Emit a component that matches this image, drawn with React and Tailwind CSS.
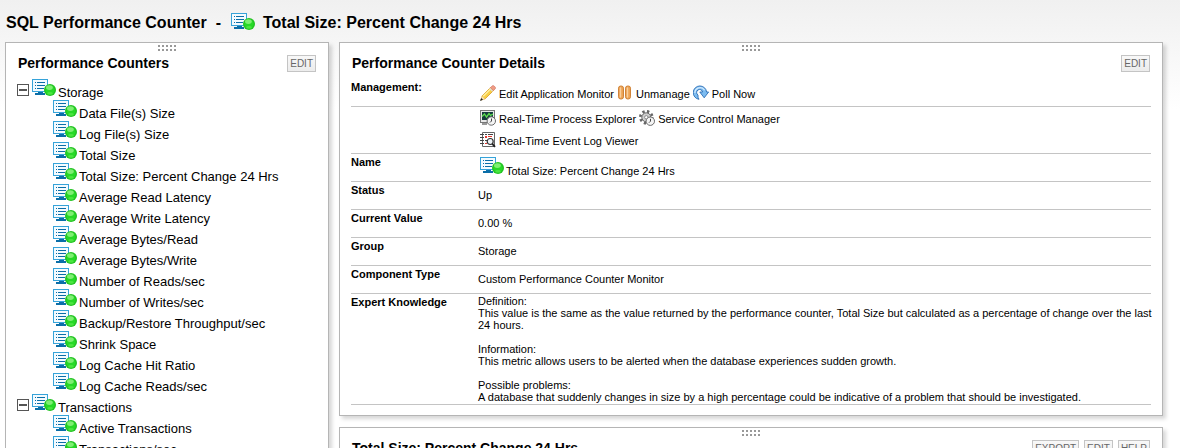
import React from "react";

const TREE = [
  {
    name: "Storage",
    items: [
      "Data File(s) Size",
      "Log File(s) Size",
      "Total Size",
      "Total Size: Percent Change 24 Hrs",
      "Average Read Latency",
      "Average Write Latency",
      "Average Bytes/Read",
      "Average Bytes/Write",
      "Number of Reads/sec",
      "Number of Writes/sec",
      "Backup/Restore Throughput/sec",
      "Shrink Space",
      "Log Cache Hit Ratio",
      "Log Cache Reads/sec",
    ],
  },
  { name: "Transactions", items: ["Active Transactions", "Transactions/sec"] },
];

function MonitorIcon() {
  return (
    <svg width="24" height="17" viewBox="0 0 24 17" className="shrink-0" aria-hidden="true">
      <rect x="0.5" y="0.5" width="15" height="12" fill="#f4fbff" stroke="#36a3d9" />
      <path d="M3 3h1v1H3zM3 6h1v1H3zM3 9h1v1H3zM5 3h8v1H5zM5 6h8v1H5zM5 9h7v1H5z" fill="#0b6ea8" />
      <path d="M6 13h5v1H6zM3 14h10v2H3z" fill="#0b6ea8" />
      <circle cx="18" cy="11" r="6" fill="#22c322" />
      <circle cx="18" cy="11" r="4.6" fill="#27d927" />
      <ellipse cx="17.4" cy="8.6" rx="3.4" ry="2.4" fill="#9cf58c" opacity="0.75" />
      <ellipse cx="18" cy="14.4" rx="2.8" ry="1.4" fill="#63ee50" opacity="0.6" />
    </svg>
  );
}

function PencilIcon() {
  return (
    <svg width="16" height="16" viewBox="0 0 16 16" className="shrink-0" aria-hidden="true">
      <path d="M1 15 2.200 10.800 10.500 2.500 13.500 5.500 5.200 13.800z" fill="#f9cf45" stroke="#d59a26" strokeWidth="0.8" />
      <path d="M3.200 11.300 11 3.500" stroke="#fff0a0" strokeWidth="1.400" />
      <path d="M10.300 2.700 12.300 0.800Q13.200 0.100 14.200 1.100L15.200 2.100Q16 3 15.200 3.900L13.300 5.700z" fill="#ef9c86" stroke="#cf7363" strokeWidth="0.600" />
      <path d="M9.700 3.300 12.700 6.300" stroke="#ddd" strokeWidth="1.200" />
      <path d="M2 11.200 4.800 14 0.500 15.500z" fill="#f6e0b8" />
      <path d="M1.200 13 3 14.800 0 16z" fill="#222" />
    </svg>
  );
}

function PauseIcon() {
  return (
    <svg width="16" height="16" viewBox="0 0 16 16" className="shrink-0" aria-hidden="true">
      <rect x="1.500" y="1" width="5" height="13" rx="2.200" fill="#eda355" stroke="#cf8338" />
      <rect x="8.500" y="1" width="5" height="13" rx="2.200" fill="#eda355" stroke="#cf8338" />
      <path d="M3.500 3v9M10.500 3v9" stroke="#f9cf9c" strokeWidth="1.400" strokeLinecap="round" />
    </svg>
  );
}

function PollIcon() {
  return (
    <svg width="16" height="16" viewBox="0 0 16 16" className="shrink-0" aria-hidden="true">
      <path
        d="M6 14.300A6.700 6.700 0 1 1 13.600 7H15.600L11.200 12.800 6.800 7H9.600A3 3 0 1 0 5 10Q4.600 12.500 6 14.300z"
        fill="#7dbcf0" stroke="#2a6db4" strokeWidth="0.9" strokeLinejoin="round"
      />
      <path d="M1.900 8A5.200 5.200 0 0 1 11.600 5.300" fill="none" stroke="#d3ebff" strokeWidth="1.200" />
    </svg>
  );
}

function ProcessIcon() {
  return (
    <svg width="16" height="16" viewBox="0 0 16 16" className="shrink-0" aria-hidden="true">
      <rect x="0.5" y="0.500" width="14" height="12" fill="#e8e8e8" stroke="#777" />
      <rect x="2" y="2" width="11" height="8" fill="#153c3c" />
      <path d="M2 6.500 4.500 4 6.500 7 9 3.500 10.500 5.500 13 4" fill="none" stroke="#5fe04f" strokeWidth="1.300" />
      <path d="M2 13h5v2H2z" fill="#999" />
      <circle cx="11.300" cy="11" r="4.200" fill="#f4f4f4" stroke="#6a6a6a" />
      <path d="M11.500 8.500V11L10 12.500" fill="none" stroke="#444" />
    </svg>
  );
}

function GearIcon() {
  return (
    <svg width="16" height="16" viewBox="0 0 16 16" className="shrink-0" aria-hidden="true">
      <circle cx="7.300" cy="7.300" r="6" fill="none" stroke="#666" strokeWidth="2.600" strokeDasharray="2.300 2.412" />
      <circle cx="7.300" cy="7.300" r="4.500" fill="#cfcfcf" stroke="#666" />
      <circle cx="7.300" cy="7.300" r="1.700" fill="#fff" stroke="#777" strokeWidth="0.800" />
      <circle cx="11.300" cy="11.200" r="4.200" fill="#f5f5f5" stroke="#6a6a6a" />
      <path d="M11.500 8.800V11.200L10 12.700" fill="none" stroke="#444" />
    </svg>
  );
}

function LogIcon() {
  return (
    <svg width="16" height="16" viewBox="0 0 16 16" className="shrink-0" aria-hidden="true">
      <path d="M2.500 0.500h12v14h-12z" fill="#fff" stroke="#666" />
      <path d="M0 2h4v1H0zM0 5h4v1H0zM0 8h4v1H0zM0 11h4v1H0z" fill="#444" />
      <path d="M5 2h2v1H5zM8 2h5v1H8z" fill="#444" />
      <path d="M5 4h2v2H5zM8 4h4v1H8z" fill="#e33c33" />
      <path d="M5 8h2v1H5z" fill="#444" />
      <path d="M5 11h2v1H5z" fill="#e33c33" />
      <circle cx="10.200" cy="9.500" r="3" fill="#eef4f8" stroke="#333" strokeWidth="1.200" />
      <path d="M12.300 11.800 15 14.800" stroke="#222" strokeWidth="1.800" />
    </svg>
  );
}

function Grip() {
  return (
    <svg width="19" height="7" viewBox="0 0 19 7" className="mx-auto block" aria-hidden="true">
      <path
        d="M0 0h2v2H0zM4 0h2v2H4zM8 0h2v2H8zM12 0h2v2h-2zM16 0h2v2h-2zM0 4h2v2H0zM4 4h2v2H4zM8 4h2v2H8zM12 4h2v2h-2zM16 4h2v2h-2z"
        fill="#999"
      />
    </svg>
  );
}

function PanelButton({ children }) {
  return (
    <button
      type="button"
      className="h-[17px] border border-[#c4c4c4] bg-gradient-to-b from-[#f8f8f8] to-[#ececec] px-[2px] text-[10px] leading-[14px] text-[#666]"
    >
      {children}
    </button>
  );
}

function Panel({ title, buttons, className, children }) {
  return (
    <section className={`border border-[#b5b5b5] bg-white px-[11px] pt-[2px] shadow-[3px_3px_4px_rgba(0,0,0,0.16)] ${className}`}>
      <Grip />
      <header className="flex h-[21px] items-end justify-between px-[1px]">
        <h2 className="text-[14px] leading-5 font-bold">{title}</h2>
        <div className="flex gap-[5px] pb-[1px]">
          {buttons.map((b) => (
            <PanelButton key={b}>{b}</PanelButton>
          ))}
        </div>
      </header>
      {children}
    </section>
  );
}

function TreeRow({ label }) {
  return (
    <span className="flex h-[21px] items-start gap-[2px]">
      <MonitorIcon />
      <span className="pt-1 leading-5">{label}</span>
    </span>
  );
}

function Action({ icon, children }) {
  return (
    <a href="#" className="flex items-center gap-[3px]">
      {icon}
      <span className="pt-[3px]">{children}</span>
    </a>
  );
}

function Row({ label, children }) {
  return (
    <tr className="border-b border-[#c4c4c4] align-top">
      <th scope="row" className="w-[127px] pt-[1px] text-left leading-[14px] font-bold">{label}</th>
      <td className="p-0">{children}</td>
    </tr>
  );
}

const FIELDS = [
  ["Status", "Up"],
  ["Current Value", "0.00 %"],
  ["Group", "Storage"],
  ["Component Type", "Custom Performance Counter Monitor"],
];

export default function App() {
  return (
    <div className="h-screen overflow-hidden bg-white bg-linear-to-b from-[#f0f0f0] to-white to-[110px] font-['Liberation_Sans',Arial,sans-serif] text-black">
      <h1 className="flex h-[42px] items-start pt-[13px] pl-[6px] text-[16px] leading-5 font-bold">
        <span>SQL Performance Counter</span>
        <span className="pr-[10px] pl-[9px]">-</span>
        <MonitorIcon />
        <span className="pl-2">Total Size: Percent Change 24 Hrs</span>
      </h1>
      <main className="flex items-start gap-[10px] pr-[17px] pl-[5px]">
        <Panel title="Performance Counters" buttons={["EDIT"]} className="w-[324px] shrink-0">
          <ul className="pt-[6px] text-[13px]">
            {TREE.map((g) => (
              <li key={g.name}>
                <div className="flex">
                  <button type="button" aria-label={`Collapse ${g.name}`} className="mt-[5px] mr-[3px] flex size-3 items-center justify-center border border-[#555] bg-white">
                    <span className="h-[2px] w-2 bg-[#555]" />
                  </button>
                  <TreeRow label={g.name} />
                </div>
                <ul className="pl-9">
                  {g.items.map((i) => (
                    <li key={i}>
                      <a href="#"><TreeRow label={i} /></a>
                    </li>
                  ))}
                </ul>
              </li>
            ))}
          </ul>
        </Panel>
        <div className="flex min-w-0 flex-1 flex-col gap-[11px]">
          <Panel title="Performance Counter Details" buttons={["EDIT"]} className="pb-[10px]">
            <table className="mt-[6px] w-full border-collapse text-[11px] leading-[14px]">
              <tbody>
                <Row label="Management:">
                  <div className="flex h-[27px] items-center gap-[3px] pl-[2px]">
                    <Action icon={<PencilIcon />}>Edit Application Monitor</Action>
                    <Action icon={<PauseIcon />}>Unmanage</Action>
                    <Action icon={<PollIcon />}>Poll Now</Action>
                  </div>
                </Row>
                <Row label="">
                  <div className="flex h-[46px] w-[320px] flex-wrap content-start gap-x-[3px] gap-y-[5px] pt-[2px] pl-[2px]">
                    <Action icon={<ProcessIcon />}>Real-Time Process Explorer</Action>
                    <Action icon={<GearIcon />}>Service Control Manager</Action>
                    <Action icon={<LogIcon />}>Real-Time Event Log Viewer</Action>
                  </div>
                </Row>
                <Row label="Name">
                  <a href="#" className="flex h-[27px] items-start gap-[2px] pt-[3px] pl-[2px]">
                    <MonitorIcon />
                    <span className="pt-[7px]">Total Size: Percent Change 24 Hrs</span>
                  </a>
                </Row>
                {FIELDS.map(([k, v]) => (
                  <Row key={k} label={k}>
                    <div className="h-[27px] pt-[6px]">{v}</div>
                  </Row>
                ))}
                <Row label="Expert Knowledge">
                  <div className="-mr-1 space-y-3 pt-[1px] pb-[1px] leading-3">
                    <p>Definition:<br />This value is the same as the value returned by the performance counter, Total Size but calculated as a percentage of change over the last 24 hours.</p>
                    <p>Information:<br />This metric allows users to be alerted when the database experiences sudden growth.</p>
                    <p>Possible problems:<br />A database that suddenly changes in size by a high percentage could be indicative of a problem that should be investigated.</p>
                  </div>
                </Row>
              </tbody>
            </table>
          </Panel>
          <Panel title="Total Size: Percent Change 24 Hrs" buttons={["EXPORT", "EDIT", "HELP"]} className="pb-6" />
        </div>
      </main>
    </div>
  );
}
